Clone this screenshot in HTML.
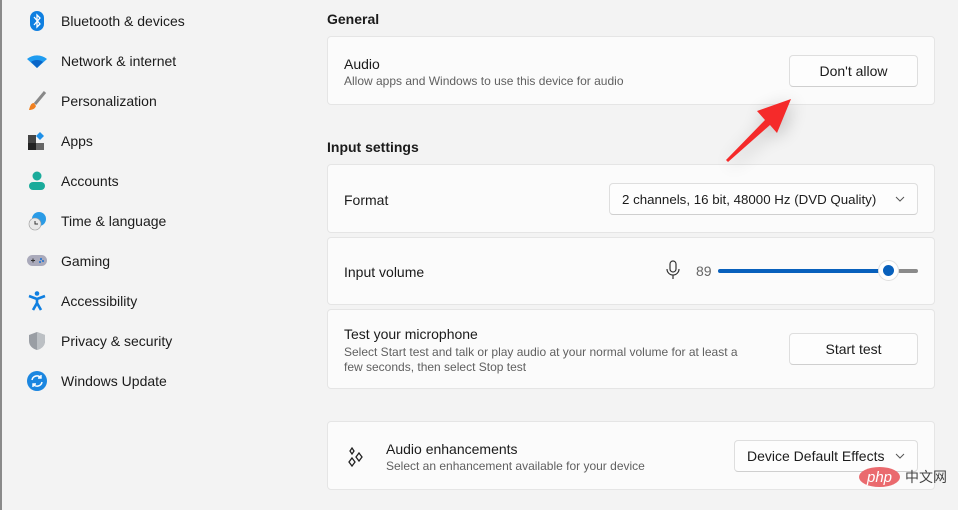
<!DOCTYPE html>
<html><head><meta charset="utf-8"><style>
*{box-sizing:border-box;margin:0;padding:0}
body{width:958px;height:510px;background:#f3f3f3;font-family:"Liberation Sans","Noto Sans CJK SC",sans-serif;color:#1b1b1b;position:relative;overflow:hidden;font-size:14px}
.lb{position:absolute;left:0;top:0;width:2px;height:510px;background:#8a8a8a}
.nav{position:absolute;left:61px;font-size:14px;color:#1b1b1b}
.ic{position:absolute;left:27px;width:20px;height:20px}
.h{position:absolute;left:327px;font-size:14px;font-weight:bold;color:#1b1b1b}
.card{position:absolute;left:327px;width:608px;background:#fbfbfb;border:1px solid #e5e5e5;border-radius:4px}
.t{position:absolute;font-size:14px}
.s{position:absolute;font-size:12px;color:#606060}
.btn{position:absolute;background:#fdfdfd;border:1px solid #dedede;border-bottom-color:#cfcfcf;border-radius:4px;font-size:14px;display:flex;align-items:center;justify-content:center}
.dd{justify-content:flex-start;padding-left:12px}
.chev{position:absolute;right:12px;top:10px}
</style></head><body>
<div class="lb"></div>

<svg class="ic" style="top:11px" viewBox="0 0 20 20"><rect x="3" y="0" width="14" height="20" rx="7" fill="#0f7fe0"/><path d="M7 6l6 7-3 3V4l3 3-6 7" stroke="#fff" stroke-width="1.3" fill="none"/></svg>
<div class="nav" style="top:13px">Bluetooth &amp; devices</div>
<svg class="ic" style="top:51px" viewBox="0 0 20 20"><path d="M0 8a14 12 0 0 1 20 0L10 17z" fill="#1f9cf0"/><path d="M4 11a9 8 0 0 1 12 0L10 17z" fill="#0a66c8"/></svg>
<div class="nav" style="top:53px">Network &amp; internet</div>
<svg class="ic" style="top:91px" viewBox="0 0 20 20"><path d="M18 1L8 13" stroke="#888" stroke-width="3"/><path d="M7 12c-3 0-4 3-5 7 3 0 6-1 7-4z" fill="#f08020"/></svg>
<div class="nav" style="top:93px">Personalization</div>
<svg class="ic" style="top:131px" viewBox="0 0 20 20"><rect x="1" y="4" width="8" height="8" fill="#444"/><rect x="1" y="12" width="8" height="7" fill="#222"/><rect x="9" y="12" width="8" height="7" fill="#666"/><path d="M13 1l4 4-4 4-4-4z" fill="#1e90e8"/></svg>
<div class="nav" style="top:133px">Apps</div>
<svg class="ic" style="top:171px" viewBox="0 0 20 20"><circle cx="10" cy="5" r="4.5" fill="#1aab9b"/><rect x="2" y="11" width="16" height="8" rx="4" fill="#1aab9b"/></svg>
<div class="nav" style="top:173px">Accounts</div>
<svg class="ic" style="top:211px" viewBox="0 0 20 20"><circle cx="12" cy="8" r="7" fill="#2a9be6"/><circle cx="8" cy="13" r="6" fill="#e8e8e8" stroke="#999" stroke-width=".6"/><path d="M8 10v3h3" stroke="#333" fill="none"/></svg>
<div class="nav" style="top:213px">Time &amp; language</div>
<svg class="ic" style="top:251px" viewBox="0 0 20 20"><rect x="0" y="4" width="20" height="11" rx="5.5" fill="#aab"/><path d="M4 9.5h4M6 7.5v4" stroke="#333"/><circle cx="14" cy="8" r="1" fill="#1a6fd0"/><circle cx="13" cy="11" r="1" fill="#1a6fd0"/><circle cx="16" cy="10" r="1" fill="#1a6fd0"/></svg>
<div class="nav" style="top:253px">Gaming</div>
<svg class="ic" style="top:291px" viewBox="0 0 20 20"><circle cx="10" cy="2.5" r="2.3" fill="#0f7fe0"/><path d="M2 5l8 3 8-3M10 8v4l-4 7M10 12l4 7" stroke="#0f7fe0" stroke-width="2.6" fill="none"/></svg>
<div class="nav" style="top:293px">Accessibility</div>
<svg class="ic" style="top:331px" viewBox="0 0 20 20"><path d="M10 1l8 3v6c0 5-4 8-8 9-4-1-8-4-8-9V4z" fill="#9a9ea4"/><path d="M10 1l8 3v6c0 5-4 8-8 9z" fill="#bcc0c4"/></svg>
<div class="nav" style="top:333px">Privacy &amp; security</div>
<svg class="ic" style="top:371px" viewBox="0 0 20 20"><circle cx="10" cy="10" r="10" fill="#1b86e0"/><path d="M5 9a5 5 0 0 1 9-2M15 11a5 5 0 0 1-9 2" stroke="#fff" stroke-width="1.5" fill="none"/><path d="M14 4v3h-3M6 16v-3h3" stroke="#fff" stroke-width="1.4" fill="none"/></svg>
<div class="nav" style="top:373px">Windows Update</div>

<div class="h" style="top:11px">General</div>
<div class="card" style="top:36px;height:69px">
 <div class="t" style="left:16px;top:19px">Audio</div>
 <div class="s" style="left:16px;top:37px">Allow apps and Windows to use this device for audio</div>
</div>
<div class="btn" style="left:789px;top:55px;width:129px;height:32px">Don't allow</div>

<div class="h" style="top:139px">Input settings</div>
<div class="card" style="top:164px;height:69px"><div class="t" style="left:16px;top:27px">Format</div></div>
<div class="btn dd" style="left:609px;top:183px;width:309px;height:32px;font-size:13.3px">2 channels, 16 bit, 48000 Hz (DVD Quality)<svg class="chev" width="10" height="10" viewBox="0 0 10 10"><path d="M1 3l4 4 4-4" stroke="#555" fill="none"/></svg></div>

<div class="card" style="top:237px;height:68px"><div class="t" style="left:16px;top:26px">Input volume</div></div>
<svg style="position:absolute;left:665px;top:260px" width="16" height="20" viewBox="0 0 16 20"><rect x="5" y="1" width="6" height="11" rx="3" stroke="#333" stroke-width="1.2" fill="none"/><path d="M2 9a6 6 0 0 0 12 0M8 15v4" stroke="#333" stroke-width="1.2" fill="none"/></svg>
<div style="position:absolute;left:696px;top:263px;font-size:14px;color:#666">89</div>
<div style="position:absolute;left:718px;top:269px;width:170px;height:4px;border-radius:2px;background:#0860bc"></div>
<div style="position:absolute;left:898px;top:269px;width:20px;height:4px;border-radius:2px;background:#8a8a8a"></div>
<div style="position:absolute;left:878px;top:260px;width:21px;height:21px;border-radius:50%;background:#fff;border:1px solid #e0e0e0"></div>
<div style="position:absolute;left:883px;top:265px;width:11px;height:11px;border-radius:50%;background:#0860bc"></div>

<div class="card" style="top:309px;height:80px">
 <div class="t" style="left:16px;top:16px">Test your microphone</div>
 <div class="s" style="left:16px;top:35px;line-height:15px;width:405px">Select Start test and talk or play audio at your normal volume for at least a few seconds, then select Stop test</div>
</div>
<div class="btn" style="left:789px;top:333px;width:129px;height:32px">Start test</div>

<div class="card" style="top:421px;height:69px">
 <svg style="position:absolute;left:18px;top:24px" width="22" height="22" viewBox="0 0 22 22"><path d="M6 2l2 3-2 3-2-3zM13 7l3 4-3 4-3-4zM6 12l3 4-3 4-3-4z" stroke="#222" stroke-width="1.3" fill="none"/></svg>
 <div class="t" style="left:58px;top:19px">Audio enhancements</div>
 <div class="s" style="left:58px;top:37px">Select an enhancement available for your device</div>
</div>
<div class="btn dd" style="left:734px;top:440px;width:184px;height:32px">Device Default Effects<svg class="chev" width="10" height="10" viewBox="0 0 10 10"><path d="M1 3l4 4 4-4" stroke="#555" fill="none"/></svg></div>

<svg style="position:absolute;left:0;top:0" width="958" height="510" viewBox="0 0 958 510"><defs><filter id="f" x="-50%" y="-50%" width="200%" height="200%"><feGaussianBlur stdDeviation="9"/></filter></defs><path d="M727 160L766 119 757 111 791 99 778 133 771 125 729 162z" fill="#000" opacity=".22" filter="url(#f)" transform="translate(2,4)"/><path d="M726 160L765 120 757 111 791 99 777 133 770 125 728 162z" fill="#f52a2a"/></svg>

<div style="position:absolute;left:859px;top:467px;width:41px;height:20px;border-radius:50%;background:#ea6a6e;color:#fff;font-size:15px;font-style:italic;display:flex;align-items:center;justify-content:center;line-height:1">php</div>
<div style="position:absolute;left:905px;top:468px;font-size:14px;color:#444;font-family:'Noto Sans CJK SC',sans-serif;white-space:nowrap;line-height:18px">中文网</div>
</body></html>
